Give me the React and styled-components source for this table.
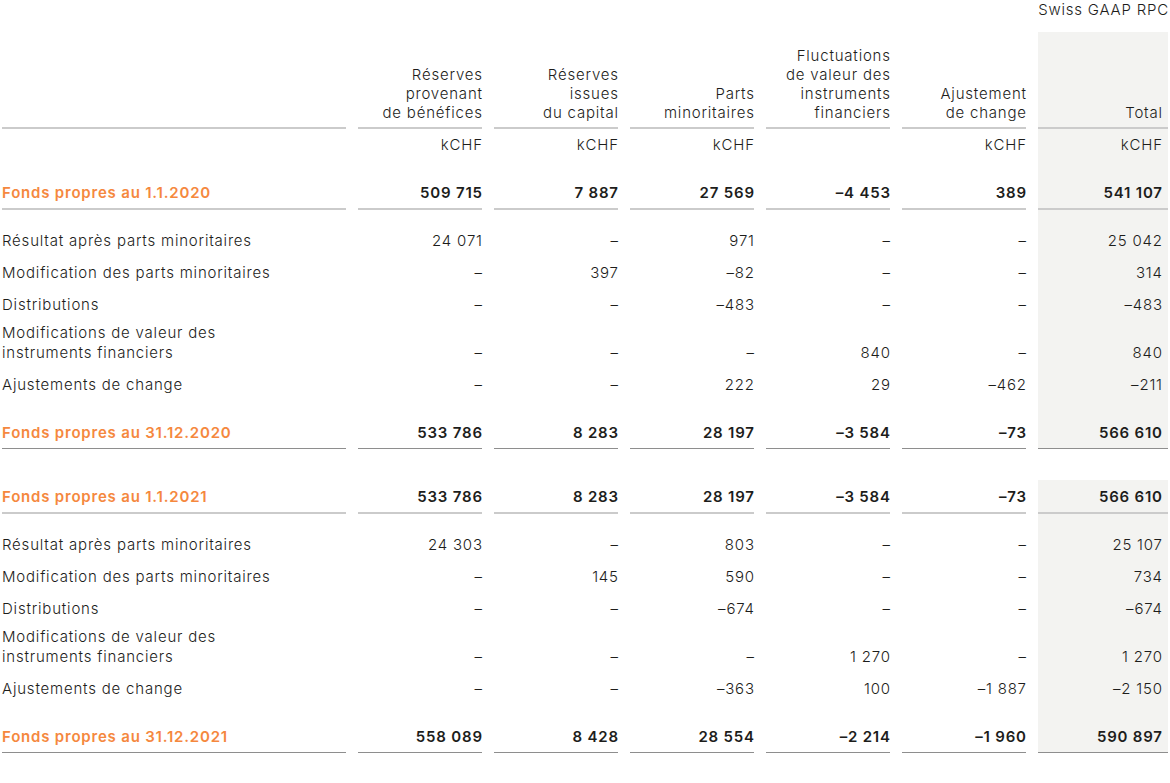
import React from "react";
import styled, { createGlobalStyle } from "styled-components";

const GlobalStyle = createGlobalStyle`
  html, body { margin: 0; padding: 0; background: #ffffff; }
  body {
    font-family: Inter, "Open Sans", "Liberation Sans", sans-serif;
    color: #1d1d1b;
    -webkit-font-smoothing: antialiased;
  }
`;

const ORANGE = "#f5883e";
const TOTAL_BG = "#f3f3f1";
const LIGHT_LINE = "#cbcbcb";
const DARK_LINE = "#8e8e8e";

const Page = styled.div`
  width: 1168px;
  padding-left: 2px;
  font-size: 15px;
  font-weight: 300;
  line-height: 20px;
  letter-spacing: 0.8px;
`;

const Caption = styled.div`
  height: 32px;
  text-align: right;
  margin-right: 1px;
  line-height: 20px;
`;

const Row = styled.div`
  display: grid;
  grid-template-columns: 344px repeat(5, 124px) 130px;
  column-gap: 12px;
  margin-top: ${(p) => p.$mt || 0}px;
  line-height: ${(p) => p.$lh || 20}px;
`;

const borderFor = (b) =>
  b === "light"
    ? `2px solid ${LIGHT_LINE}`
    : b === "dark"
    ? `1px solid ${DARK_LINE}`
    : "none";

const Cell = styled.div`
  display: grid;
  align-content: end;
  padding: ${(p) => p.$pt}px ${(p) => (p.$total ? 6 : 0)}px ${(p) => p.$pb}px 0;
  text-align: ${(p) => (p.$label ? "left" : "right")};
  background: ${(p) => (p.$total ? TOTAL_BG : "transparent")};
  border-bottom: ${(p) => borderFor(p.$border)};
  font-weight: ${(p) => (p.$bold ? 600 : 300)};
  color: ${(p) => (p.$orange ? ORANGE : "#1d1d1b")};
  white-space: nowrap;
`;

const Text = styled.span`
  margin-right: ${(p) => (p.$label ? 0 : -0.8)}px;
`;

const headers = [
  ["Réserves", "provenant", "de bénéfices"],
  ["Réserves", "issues", "du capital"],
  ["Parts", "minoritaires"],
  ["Fluctuations", "de valeur des", "instruments", "financiers"],
  ["Ajustement", "de change"],
  ["Total"],
];

const units = ["kCHF", "kCHF", "kCHF", "", "kCHF", "kCHF"];

const sections = [
  {
    opening: ["Fonds propres au 1.1.2020", ["509 715", "7 887", "27 569", "–4 453", "389", "541 107"]],
    rows: [
      [["Résultat après parts minoritaires"], ["24 071", "–", "971", "–", "–", "25 042"]],
      [["Modification des parts minoritaires"], ["–", "397", "–82", "–", "–", "314"]],
      [["Distributions"], ["–", "–", "–483", "–", "–", "–483"]],
      [["Modifications de valeur des", "instruments financiers"], ["–", "–", "–", "840", "–", "840"]],
      [["Ajustements de change"], ["–", "–", "222", "29", "–462", "–211"]],
    ],
    closing: ["Fonds propres au 31.12.2020", ["533 786", "8 283", "28 197", "–3 584", "–73", "566 610"]],
  },
  {
    opening: ["Fonds propres au 1.1.2021", ["533 786", "8 283", "28 197", "–3 584", "–73", "566 610"]],
    rows: [
      [["Résultat après parts minoritaires"], ["24 303", "–", "803", "–", "–", "25 107"]],
      [["Modification des parts minoritaires"], ["–", "145", "590", "–", "–", "734"]],
      [["Distributions"], ["–", "–", "–674", "–", "–", "–674"]],
      [["Modifications de valeur des", "instruments financiers"], ["–", "–", "–", "1 270", "–", "1 270"]],
      [["Ajustements de change"], ["–", "–", "–363", "100", "–1 887", "–2 150"]],
    ],
    closing: ["Fonds propres au 31.12.2021", ["558 089", "8 428", "28 554", "–2 214", "–1 960", "590 897"]],
  },
];

const nb = (s) => s.replace(/ /g, "\u00a0");

const Lines = ({ lines }) =>
  lines.map((l, i) => (
    <React.Fragment key={i}>
      {i > 0 && <br />}
      {l}
    </React.Fragment>
  ));

function DataRow({ label, values, pt, pb, border, bold, mt }) {
  return (
    <Row $mt={mt}>
      <Cell $label $pt={pt} $pb={pb} $border={border} $bold={bold} $orange={bold}>
        <Text $label>
          <Lines lines={label} />
        </Text>
      </Cell>
      {values.map((v, i) => (
        <Cell key={i} $pt={pt} $pb={pb} $border={border} $bold={bold} $total={i === 5}>
          <Text>{nb(v)}</Text>
        </Cell>
      ))}
    </Row>
  );
}

export default function App() {
  return (
    <>
      <GlobalStyle />
      <Page>
        <Caption>Swiss GAAP RPC</Caption>
        <Row $lh={19}>
          <Cell $label $pt={14} $pb={5} $border="light" />
          {headers.map((h, i) => (
            <Cell key={i} $pt={14} $pb={5} $border="light" $total={i === 5}>
              <Text>
                <Lines lines={h} />
              </Text>
            </Cell>
          ))}
        </Row>
        <Row>
          <Cell $label $pt={6} $pb={21} />
          {units.map((u, i) => (
            <Cell key={i} $pt={6} $pb={21} $total={i === 5}>
              <Text>{u}</Text>
            </Cell>
          ))}
        </Row>
        {sections.map((s, si) => (
          <React.Fragment key={si}>
            <DataRow
              label={[s.opening[0]]}
              values={s.opening[1]}
              pt={7}
              pb={5}
              border="light"
              bold
              mt={si === 0 ? 0 : 31}
            />
            {s.rows.map(([label, values], ri) => (
              <DataRow
                key={ri}
                label={label}
                values={values}
                pt={label.length > 1 ? 2 : ri === 0 ? 21 : 6}
                pb={6}
              />
            ))}
            <DataRow
              label={[s.closing[0]]}
              values={s.closing[1]}
              pt={22}
              pb={5}
              border="dark"
              bold
            />
          </React.Fragment>
        ))}
      </Page>
    </>
  );
}
